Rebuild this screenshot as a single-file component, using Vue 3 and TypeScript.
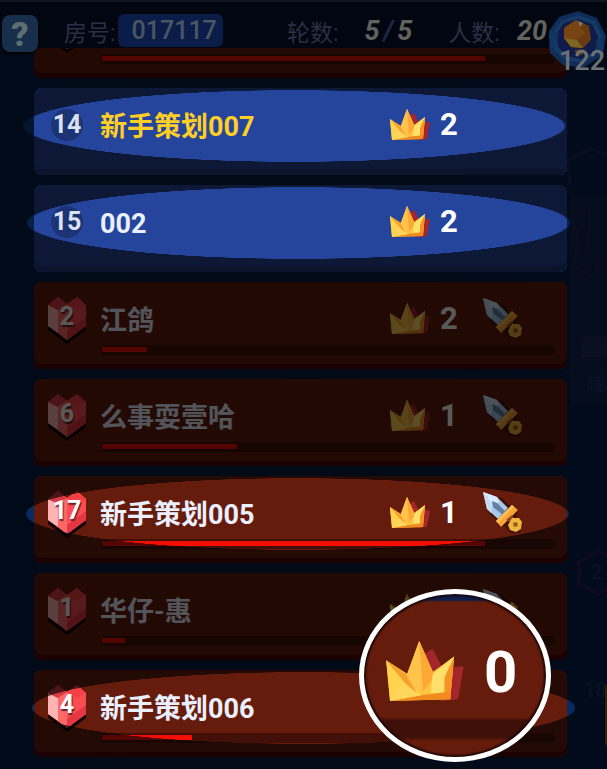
<script setup lang="ts">
interface Player {
  rank: number
  name: string
  crowns?: number
  team: 'blue' | 'red'
  health?: number
  sword?: boolean
  self?: boolean
  /** Horizontal shift of the spotlight from the card centre, in pixels. */
  spot?: number
  lens?: boolean
}

const players: Player[] = [
  { rank: 14, name: '新手策划007', crowns: 2, team: 'blue', self: true, spot: -6 },
  { rank: 15, name: '002', crowns: 2, team: 'blue', spot: -2 },
  { rank: 2, name: '江鸽', crowns: 2, team: 'red', health: 10, sword: true },
  { rank: 6, name: '么事耍壹哈', crowns: 1, team: 'red', health: 30, sword: true },
  { rank: 17, name: '新手策划005', crowns: 1, team: 'red', health: 85, sword: true, spot: -3 },
  { rank: 1, name: '华仔-惠', crowns: 0, team: 'red', health: 5, sword: true },
  { rank: 4, name: '新手策划006', team: 'red', health: 20, spot: 3, lens: true },
]
</script>

<template>
  <div class="screen">
    <svg class="symbols" aria-hidden="true">
      <symbol id="crown" viewBox="0 0 42 34">
        <path d="M20 8 25 5 30 15 41 14 38 31 30 32 18 28Z" fill="#a3272a" />
        <path d="M1 11 12 18 18 1 25 17 36 9 34 31 3 32Z" fill="#fdc440" />
        <path d="M1 11 15 25 3 32Z" fill="#ffd34e" />
        <path d="M18 1 11 20 15 26 20 27 26 19Z" fill="#ffc24a" />
        <path d="M18 1 26 19 20 27Z" fill="#fba834" />
        <path d="M36 9 25 18 24 28 33 29Z" fill="#ffe06a" />
        <path d="M36 9 34 31 31 30 31 20Z" fill="#f69322" />
        <path d="M3 32 19 29 34 27 34 31Z" fill="#f28a1e" />
        <path d="M3 32 11 20 19 29Z" fill="#ffd65b" />
        <path d="M1 11 11 18 17 28 11 23Z" fill="#f8a02b" />
      </symbol>
      <symbol id="heart" viewBox="0 0 40 48">
        <path d="M1 14 1 34 20 48 39 34 39 14Z" fill="#100202" />
        <path d="M1 9 11 1 20 8 30 1 39 9 39 30 20 44 1 30Z" fill="#f84a4f" />
        <path d="M1 9 11 14 11 37 1 30Z" fill="#ffb4b3" />
        <path d="M1 9 11 1 20 8 11 14Z" fill="#d83a43" />
        <path d="M20 8 30 1 39 9 30 14Z" fill="#f53f46" />
        <path d="M11 14 20 8 20 44 11 37Z" fill="#fd6968" />
        <path d="M20 8 30 14 39 9 39 30 20 44Z" fill="#fb4c52" />
        <path d="M20 35 39 21 39 30 20 44Z" fill="#e53643" />
      </symbol>
      <symbol id="sword" viewBox="0 0 42 44">
        <path d="M3 4 6 21 15 30 17 36 23 35 28 42 38 42 41 33 34 25 36 18 28 15 20 7Z" fill="#2a0906" opacity=".6" />
        <path d="M1 1 15 6 26 17 16 28 5 18Z" fill="#a9c8ea" />
        <path d="M1 1 15 6 17 11 11 14Z" fill="#dcecff" />
        <path d="M1 1 5 18 9 22 11 14Z" fill="#c6dcf5" />
        <path d="M10 10 15 12 24 21 21 24 11 16Z" fill="#637fa6" />
        <path d="M14 30 30 14 36 19 19 36Z" fill="#f7a435" />
        <path d="M14 30 30 14 32 16 16 32Z" fill="#ffc154" />
        <path d="M24 29 30 24 32 28 28 31Z" fill="#8a4720" />
        <path d="M30 27 37 27 40 31 39 38 34 41 28 39 26 34Z" fill="#f0b53c" />
        <path d="M31 32 35 31 36 35 32 36Z" fill="#985b20" />
      </symbol>
    </svg>

    <header class="topbar">
      <button class="help" type="button">?</button>
      <div class="stat room"><span>房号:</span><b class="pill">017117</b></div>
      <div class="stat rounds"><span>轮数:</span><b class="slant">5<i>/</i>5</b></div>
      <div class="stat people"><span>人数:</span><b class="slant">20</b></div>
      <div class="coin">
        <svg viewBox="0 0 60 60" aria-hidden="true">
          <path d="M31 2 50 9 59 27 56 46 36 59 16 56 3 44 2 22 12 8Z" fill="#102d57" />
          <path d="M31 6 48 12 55 27 51 43 35 54 18 51 7 41 6 24 14 12Z" fill="#153a66" />
          <path d="M31 10 45 15 51 28 48 42 34 50 20 47 11 38 10 24 17 14Z" fill="#101b49" />
          <path d="M2 22 12 24 9 35 3 44ZM56 26 49 32 51 46 56 46Z" fill="#123460" />
          <path d="M17 19 29 11 42 17 44 31 36 39 24 38 17 29Z" fill="#683a12" />
          <path d="M17 19 29 11 33 18 38 24 30 31 17 29Z" fill="#784512" />
          <path d="M17 29 30 31 36 39 24 38Z" fill="#7b651f" />
          <path d="M31 12 36 14 33 18Z" fill="#84786a" />
          <path d="M28 41 38 40 35 46 29 46Z" fill="#633a12" />
        </svg>
        <b>122</b>
      </div>
    </header>

    <main class="board">
      <svg class="scenery" viewBox="0 0 47 600" aria-hidden="true">
        <path d="M10 50H47V260H10Z" fill="#050c1b" />
        <path d="M47 10 30 4 8 16 10 40M10 70 18 90 14 120 32 132M30 60 28 100 40 130" fill="none" stroke="#080e20" stroke-width="4" />
        <path d="M24 192H47V212H20Z" fill="#0a1020" />
        <path d="M19 417 38 406 57 417 57 438 38 449 19 438Z" fill="none" stroke="#0e0a22" stroke-width="4" />
        <text x="31" y="434">2</text>
        <text x="26" y="246">咸</text>
        <text x="24" y="552">18</text>
        <path d="M45 540H47V600H45Z" fill="#29220d" />
      </svg>

      <section class="card red clipped">
        <div class="panel">
          <svg class="heart" aria-hidden="true"><use href="#heart" /></svg>
          <div class="track"><div class="fill" :style="{ width: '85%' }"></div></div>
        </div>
        <div class="shade"></div>
      </section>

      <section
        v-for="p in players"
        :key="p.rank"
        class="card"
        :class="[p.team, { self: p.self, lit: p.spot !== undefined }]"
        :style="{ '--shift': (p.spot ?? 0) + 'px' }"
      >
        <div v-if="p.spot !== undefined" class="glow"></div>
        <div class="panel">
          <div class="badge">
            <svg v-if="p.team === 'red'" class="heart" aria-hidden="true"><use href="#heart" /></svg>
            <b>{{ p.rank }}</b>
          </div>
          <span class="name">{{ p.name }}</span>
          <div v-if="p.crowns !== undefined" class="crowns">
            <svg aria-hidden="true"><use href="#crown" /></svg>
            <b>{{ p.crowns }}</b>
          </div>
          <svg v-if="p.sword" class="sword" aria-hidden="true"><use href="#sword" /></svg>
          <div v-if="p.health !== undefined" class="track">
            <div class="fill" :style="{ width: p.health + '%' }"></div>
          </div>
        </div>
        <div class="shade"></div>
        <div v-if="p.lens" class="lens">
          <svg aria-hidden="true"><use href="#crown" /></svg>
          <b>0</b>
        </div>
      </section>
    </main>
  </div>
</template>

<style>
body {
  background: #010a18;
}
</style>

<style scoped>
.screen {
  position: relative;
  overflow: hidden;
  background: linear-gradient(90deg, #010a18, #020a17 60%, #020b1b);
  font-family: Roboto, "Noto Sans CJK SC", sans-serif;
}

.symbols {
  position: absolute;
  width: 0;
  height: 0;
}

.topbar {
  position: relative;
  z-index: 3;
  display: flex;
  align-items: flex-start;
  box-sizing: border-box;
  height: 48px;
  padding: 12px 60px 0 2px;
  background: #020610;
  border-top: 2px solid #10171f;
  color: #2a3045;
  font-size: 23px;
}

.help {
  flex: none;
  width: 36px;
  height: 37px;
  margin: 1px 26px 0 0;
  padding: 0;
  border: 0;
  border-radius: 8px;
  background: #182f4c;
  box-shadow: 0 2px 2px #01040a;
  color: #5f6e6f;
  font: 900 34px/38px Roboto, sans-serif;
}

.stat {
  display: flex;
  align-items: center;
  height: 33px;
  white-space: nowrap;
}

.room {
  gap: 2px;
}

.pill {
  box-sizing: border-box;
  width: 105px;
  height: 33px;
  padding-left: 14px;
  border-radius: 6px;
  background: #0a1d48;
  color: #4b5563;
  font-size: 25px;
  font-weight: 500;
  line-height: 33px;
}

.rounds {
  flex: 1;
  justify-content: flex-end;
  gap: 26px;
  margin-right: 36px;
}

.people {
  gap: 17px;
}

.slant {
  color: #62625f;
  font-size: 27px;
  font-style: italic;
}

.slant i {
  margin: 0 4px;
  color: #1c2848;
}

.coin {
  position: absolute;
  top: 7px;
  right: 0;
  width: 60px;
}

.coin svg {
  display: block;
  width: 60px;
  height: 60px;
}

.coin b {
  position: absolute;
  right: 2px;
  bottom: -7px;
  color: #6f7275;
  font-size: 27px;
  font-weight: 500;
  line-height: 30px;
}

.board {
  position: relative;
  display: flex;
  flex-direction: column;
  gap: 10px;
  overflow: hidden;
  padding: 0 40px 12px 34px;
}

.scenery {
  position: absolute;
  top: 73px;
  right: 0;
  bottom: 0;
  width: 47px;
  height: 648px;
  fill: #0c1327;
  font-size: 20px;
}

.card {
  position: relative;
  height: 87px;
}

.clipped {
  margin-top: -57px;
}

.panel {
  position: relative;
  display: flex;
  align-items: center;
  box-sizing: border-box;
  height: 87px;
  padding: 0 43px 13px 12px;
  border-radius: 8px;
}

.blue .panel {
  background: #25459c;
  box-shadow: inset 0 -6px #1d3a80;
}

.red .panel {
  background: #661c0c;
  box-shadow: inset 0 -5px #4d0101;
}

.shade {
  position: absolute;
  inset: 0;
  border-radius: 8px;
  background: rgba(0, 0, 0, 0.65);
}

.lit .shade {
  background: radial-gradient(ellipse 51% 36px at calc(50% + var(--shift)) 38px, transparent 99%, rgba(0, 0, 0, 0.65) 100%);
}

.glow {
  position: absolute;
  top: 2px;
  left: calc(var(--shift) - 1%);
  width: 102%;
  height: 72px;
  border-radius: 50%;
  background: #0a2a60;
}

.blue .glow {
  background: #06204a;
}

.self .glow {
  background: #04162e;
}

.badge {
  position: relative;
  display: grid;
  place-items: center;
  width: 42px;
  height: 48px;
  color: #fff;
  font-size: 25px;
}

.badge b {
  position: relative;
  margin-bottom: 4px;
  line-height: 28px;
  text-shadow: 1px 2px 1px rgba(40, 10, 20, 0.7);
}

.blue .badge b {
  margin-bottom: 0;
  color: #dbe2f5;
  text-shadow: none;
}

.blue .badge::before {
  position: absolute;
  top: 8px;
  left: 5px;
  width: 32px;
  height: 32px;
  border-radius: 50%;
  background: #1c3474;
  content: "";
}

.heart {
  position: absolute;
  top: 1px;
  left: 1px;
  width: 40px;
  height: 48px;
}

.clipped .heart {
  top: 14px;
  left: 13px;
}

.name {
  flex: 1;
  margin-top: 4px;
  margin-left: 12px;
  color: #eaf0ff;
  font-size: 27px;
  font-weight: 700;
  line-height: 36px;
  white-space: nowrap;
}

.self .name {
  color: #ffcf26;
}

.crowns {
  display: flex;
  align-items: center;
  gap: 9px;
  width: 93px;
  margin-right: 42px;
  color: #fff;
  font-size: 31px;
  line-height: 36px;
}

.crowns svg {
  width: 42px;
  height: 34px;
}

.red .crowns {
  margin-right: 0;
}

.sword {
  width: 42px;
  height: 44px;
}

.track {
  position: absolute;
  right: 12px;
  bottom: 14px;
  left: 66px;
  height: 6px;
  padding: 2px;
  border-radius: 5px;
  background: #421008;
}

.fill {
  height: 5px;
  background: #f40f05;
}

.lens {
  position: absolute;
  z-index: 2;
  top: -81px;
  right: 16px;
  display: flex;
  align-items: center;
  gap: 18px;
  box-sizing: border-box;
  width: 192px;
  height: 173px;
  padding: 0 0 8px 20px;
  border: 5px solid #fff;
  border-radius: 50%;
  background: linear-gradient(#0c1f50 6px, #661c0c 8px, #661c0c 123px, #3f1009 127px, #3f1009 143px, #661c0c 147px);
  box-shadow: inset 0 0 2px 2px #1d0808;
  color: #fff;
  font-size: 58px;
}

.lens svg {
  width: 82px;
  height: 66px;
}

.lens b {
  line-height: 64px;
}
</style>
